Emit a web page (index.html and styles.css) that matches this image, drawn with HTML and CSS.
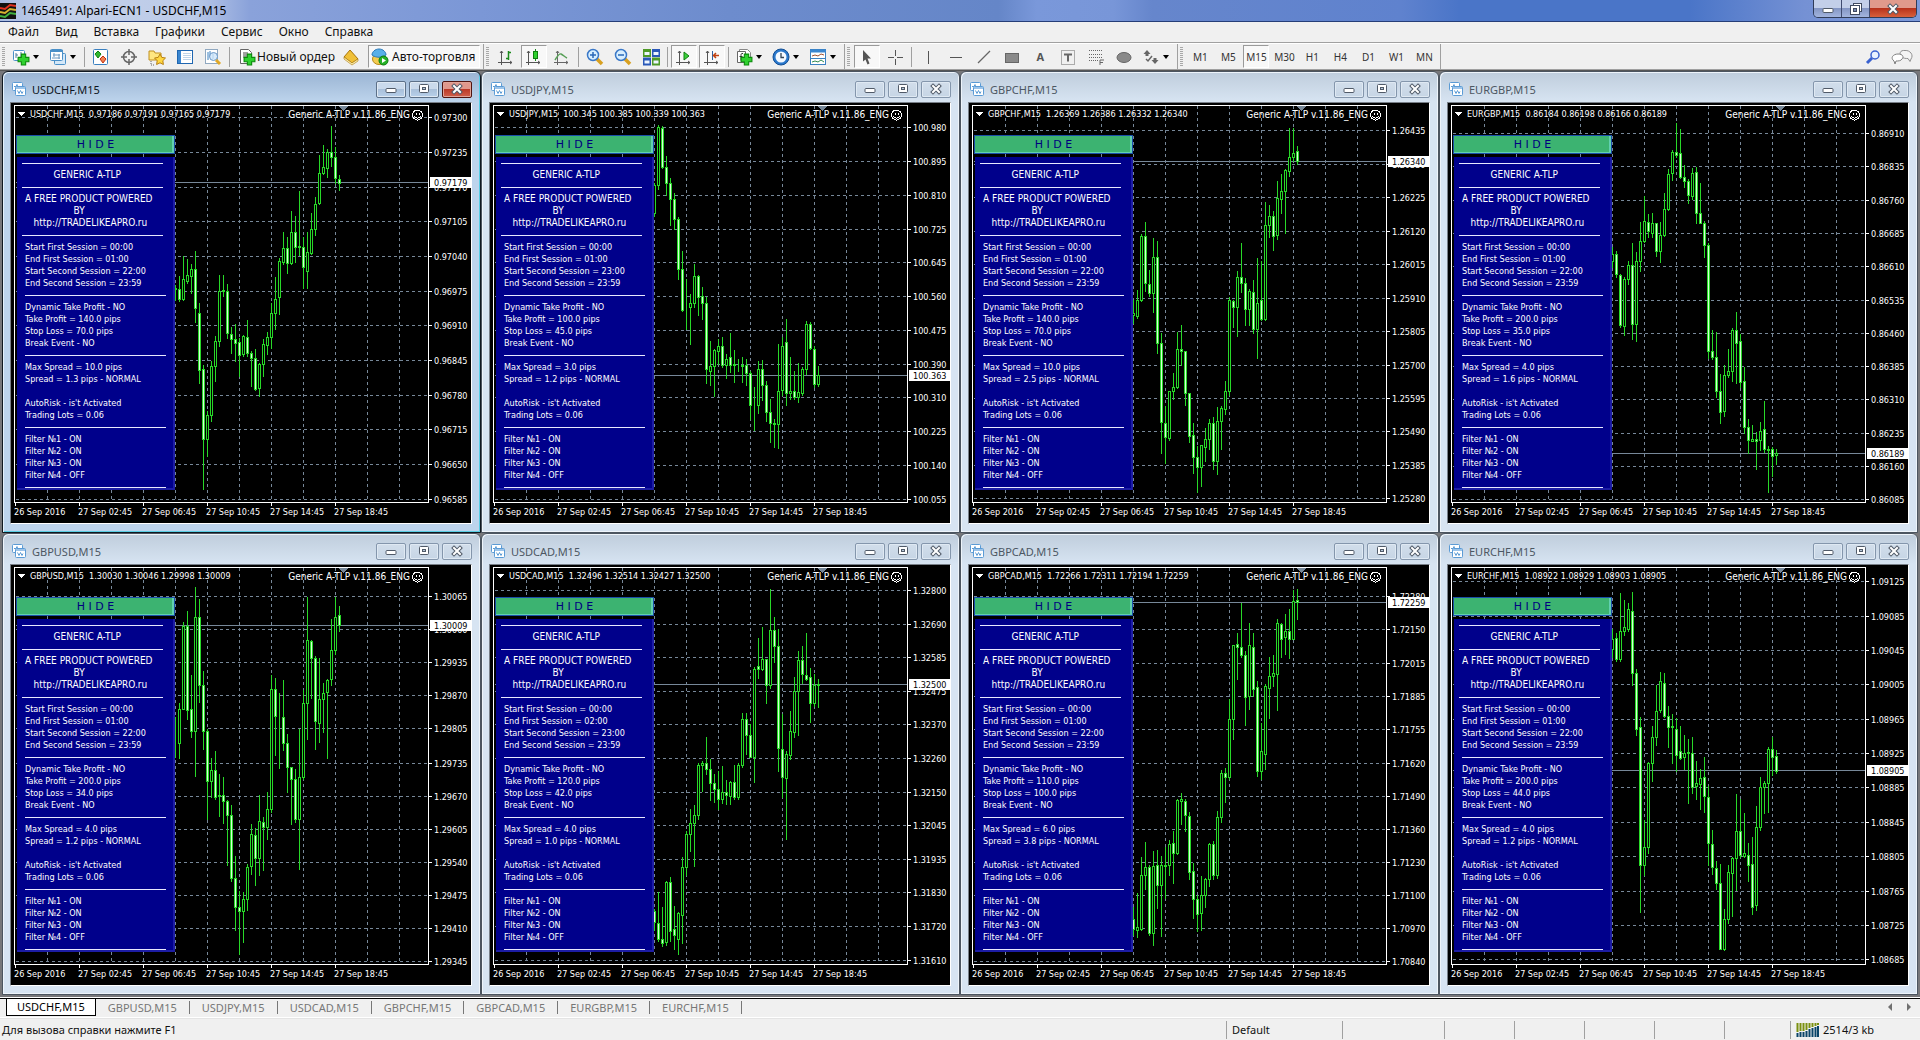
FILE: index.html
```
<!DOCTYPE html>
<html lang="ru">
<head>
<meta charset="utf-8">
<title>1465491: Alpari-ECN1 - USDCHF,M15</title>
<link rel="stylesheet" href="styles.css">
</head>
<body>
<svg class="defs" aria-hidden="true">
  <defs>
    <symbol id="i-chartwin" viewBox="0 0 14 14"><rect x="0.5" y="0.5" width="10" height="8" rx="1" fill="#fff" stroke="#5b9bd5"/><path d="M2 4.5h2l1-2 1 3 1-1h2" fill="none" stroke="#5b9bd5"/><rect x="3.5" y="4.5" width="10" height="9" rx="1" fill="#fff" stroke="#5b9bd5"/><path d="M4 6h9" stroke="#9cc4ea" stroke-width="2"/><path d="M5.500 8.500l1.500 3 1.500-3 1.500 3 1-2" fill="none" stroke="#5b9bd5"/></symbol>
    <symbol id="i-min" viewBox="0 0 14 12"><rect x="2" y="5.500" width="10" height="4" rx="1" fill="#fff" stroke="#505a68"/></symbol>
    <symbol id="i-max" viewBox="0 0 14 12"><rect x="2.500" y="1.500" width="9" height="8" rx="1" fill="#fff" stroke="#505a68"/><rect x="5.500" y="4.500" width="3" height="2" fill="#b8c8da" stroke="#505a68"/></symbol>
    <symbol id="i-close" viewBox="0 0 14 12"><path d="M4 3l6 6M10 3l-6 6" stroke="#505a68" stroke-width="4" stroke-linecap="square"/><path d="M4 3l6 6M10 3l-6 6" stroke="#fff" stroke-width="2" stroke-linecap="square"/></symbol>
    <symbol id="i-plus" viewBox="0 0 12 12"><path d="M4 1h4v3h3v4h-3v3h-4v-3h-3v-4h3z" fill="#2fd12f" stroke="#0b8a0b"/></symbol>
  </defs>
</svg>

<header class="titlebar">
  <svg class="app-icon" viewBox="0 0 16 16"><rect width="16" height="16" fill="#111"/><path d="M0 5l5 1 5-4 6 1" fill="none" stroke="#e03020" stroke-width="2"/><path d="M0 9l5 1 5-4 6 1" fill="none" stroke="#d8b030" stroke-width="2"/><path d="M0 13l5 1 5-4 6 1" fill="none" stroke="#40b040" stroke-width="2"/></svg>
  <h1 class="app-title">1465491: Alpari-ECN1 - USDCHF,M15</h1>
  <div class="sys-buttons">
    <button class="sys" aria-label="Свернуть"><svg width="14" height="12"><use href="#i-min"/></svg></button>
    <button class="sys" aria-label="Свернуть в окно"><svg width="14" height="12" viewBox="0 0 14 12"><rect x="4.500" y="0.500" width="8" height="8" fill="#fff" stroke="#404a60"/><rect x="1.500" y="2.500" width="9" height="9" fill="#fff" stroke="#404a60"/><rect x="4.500" y="5.500" width="3" height="3" fill="#7888b0" stroke="#404a60"/></svg></button>
    <button class="sys sys-close" aria-label="Закрыть"><svg width="14" height="12"><use href="#i-close"/></svg></button>
  </div>
</header>

<nav class="menu">
  <button>Файл</button><button>Вид</button><button>Вставка</button><button>Графики</button><button>Сервис</button><button>Окно</button><button>Справка</button>
</nav>

<div class="toolbars">
  <div class="toolbar">
    <span class="grip"></span>
    <button class="tool drop" aria-label="Новый график"><svg width="18" height="18" viewBox="0 0 18 18"><rect x="1.500" y="2.500" width="11" height="10" rx="1" fill="#fff" stroke="#4a90c8"/><path d="M4 5v5M4 7h2M9 4v5" stroke="#4a7a98"/><use href="#i-plus" x="5" y="5" width="13" height="13"/></svg></button>
    <button class="tool drop" aria-label="Профили"><svg width="18" height="18" viewBox="0 0 18 18"><rect x="5.500" y="5.500" width="11" height="11" rx="1" fill="#d5e8f8" stroke="#4a90c8"/><rect x="1.500" y="1.500" width="12" height="11" rx="1" fill="#fff" stroke="#4a90c8"/><path d="M1 3h13" stroke="#4a90c8" stroke-width="2"/><path d="M4 7h7M5 5v4M10 6v5M3 10h8" stroke="#6a98c0"/></svg></button>
    <span class="sep"></span>
    <button class="tool" aria-label="Обзор рынка"><svg width="18" height="18" viewBox="0 0 18 18"><rect x="1.500" y="1.500" width="14" height="15" rx="1" fill="#fff" stroke="#3a80c0"/><path d="M6 3l3 3-3 4-3-4z" fill="#30b830" stroke="#108010"/><path d="M11 8l3 3-3 4-3-4z" fill="#f08050" stroke="#c03010"/></svg></button>
    <button class="tool" aria-label="Окно данных"><svg width="18" height="18" viewBox="0 0 18 18"><circle cx="9" cy="9" r="5.500" fill="none" stroke="#666" stroke-width="1.500"/><path d="M9 1v6M9 11v6M1 9h6M11 9h6" stroke="#666" stroke-width="1.500"/></svg></button>
    <button class="tool" aria-label="Навигатор"><svg width="18" height="18" viewBox="0 0 18 18"><path d="M1 3h5l1 2h6v7H1z" fill="#ffe680" stroke="#c09020"/><path d="M3 13v4h4" fill="none" stroke="#666" stroke-dasharray="1 1"/><path d="M12 6l1.800 3.400 3.700.6-2.700 2.700.6 3.800-3.400-1.700-3.400 1.700.6-3.800L6.500 10l3.700-.6z" fill="#ffd740" stroke="#b88010"/></svg></button>
    <button class="tool" aria-label="Терминал"><svg width="18" height="18" viewBox="0 0 18 18"><rect x="1.500" y="2.500" width="15" height="13" fill="#fff" stroke="#1f66b0"/><rect x="2" y="3" width="3" height="12" fill="#3a86d0"/><path d="M7 5.500h8M7 7.500h8M7 9.500h8M7 11.500h8" stroke="#c0d4e8"/></svg></button>
    <button class="tool" aria-label="Тестер стратегий"><svg width="18" height="18" viewBox="0 0 18 18"><rect x="1.500" y="1.500" width="12" height="14" fill="#fff" stroke="#90a8c0"/><path d="M4 4v8M6 3v6M9 5v6" stroke="#3a80c0"/><circle cx="9.500" cy="8.500" r="4" fill="#cfe6fa" fill-opacity=".8" stroke="#6a98c8"/><path d="M12 12l4 4" stroke="#e0a828" stroke-width="3"/></svg></button>
    <span class="sep"></span>
    <button class="tool order"><svg width="18" height="18" viewBox="0 0 18 18"><path d="M2.500 1.500h8l3 3v11h-11z" fill="#fff" stroke="#666"/><path d="M5 5h5M5 7h6M5 9h6" stroke="#444"/><use href="#i-plus" x="5" y="5" width="13" height="13"/></svg>Новый ордер</button>
    <button class="tool" aria-label="MetaEditor"><svg width="18" height="18" viewBox="0 0 18 18"><path d="M8 2l8 9-6 4-8-6z" fill="#f0c038" stroke="#a87408"/><path d="M2 9l8 6 6-4v2l-6 4-8-6z" fill="#fff2b0" stroke="#a87408" stroke-width=".6"/></svg></button>
    <button class="tool auto pressed"><svg width="18" height="18" viewBox="0 0 18 18"><ellipse cx="8" cy="11" rx="6.500" ry="5.500" fill="#f3cc50" stroke="#b88818"/><path d="M1 7c0-3 3-6 7-6s7 3 7 6c-4 3-10 3-14 0z" fill="#58b0e8" stroke="#2a78b8"/><circle cx="12.500" cy="12.500" r="4.500" fill="#26b226" stroke="#0b7a0b"/><path d="M11 10l4 2.500-4 2.500z" fill="#fff"/></svg>Авто-торговля</button>
  </div>
  <div class="toolbar">
    <span class="grip"></span>
    <button class="tool" aria-label="Бары"><svg width="18" height="18" viewBox="0 0 18 18"><path d="M4.500 3v14M1 14.500h14M3 5l1.500-2 1.500 2M13 13l2 1.500-2 1.500" fill="none" stroke="#555"/><path d="M11.500 3v9M9 10.500h2M12 4.500h2" stroke="#1c8a1c" stroke-width="1.500"/></svg></button>
    <button class="tool pressed" aria-label="Свечи"><svg width="18" height="18" viewBox="0 0 18 18"><path d="M3.500 3v14M1 14.500h14M2 5l1.500-2 1.500 2M13 13l2 1.500-2 1.500" fill="none" stroke="#555"/><path d="M10.500 1v12" stroke="#1c8a1c"/><rect x="8.500" y="3.500" width="4" height="7" fill="#2fd12f" stroke="#108010"/></svg></button>
    <button class="tool" aria-label="Линия"><svg width="18" height="18" viewBox="0 0 18 18"><path d="M4.500 3v14M1 14.500h14M3 5l1.500-2 1.500 2M13 13l2 1.500-2 1.500" fill="none" stroke="#666"/><path d="M2 12c2-3 4-7 6-6s4 3 6 4" fill="none" stroke="#58a058" stroke-width="1.500"/></svg></button>
    <span class="sep"></span>
    <button class="tool" aria-label="Увеличить"><svg width="18" height="18" viewBox="0 0 18 18"><path d="M10 10l6 6" stroke="#d8a020" stroke-width="3.500"/><circle cx="7" cy="7" r="5.500" fill="#d8efff" stroke="#3a78c8" stroke-width="1.500"/><path d="M7 4v6M4 7h6" stroke="#2a68b8" stroke-width="1.500"/></svg></button>
    <button class="tool" aria-label="Уменьшить"><svg width="18" height="18" viewBox="0 0 18 18"><path d="M10 10l6 6" stroke="#d8a020" stroke-width="3.500"/><circle cx="7" cy="7" r="5.500" fill="#d8efff" stroke="#3a78c8" stroke-width="1.500"/><path d="M4 7h6" stroke="#2a68b8" stroke-width="1.500"/></svg></button>
    <button class="tool" aria-label="Окна мозаикой"><svg width="18" height="18" viewBox="0 0 18 18"><path d="M1 1h8v8H1zM10 9.500h8v8h-8z" fill="#4f9a28"/><path d="M10 1h8v8h-8zM1 9.500h8v8H1z" fill="#2a58b8"/><path d="M2.500 4h5v3h-5zM11.500 4h5v3h-5zM2.500 12.500h5v3h-5zM11.500 12.500h5v3h-5z" fill="#eef6ff"/></svg></button>
    <span class="sep"></span>
    <button class="tool pressed" aria-label="Автопрокрутка"><svg width="18" height="18" viewBox="0 0 18 18"><path d="M4.500 3v14M1 14.500h14M3 5l1.500-2 1.500 2M13 13l2 1.500-2 1.500" fill="none" stroke="#555"/><path d="M9 4l5 4-5 4z" fill="#3ad03a" stroke="#108010"/></svg></button>
    <button class="tool pressed" aria-label="Сдвиг графика"><svg width="18" height="18" viewBox="0 0 18 18"><path d="M4.500 3v14M1 14.500h14M3 5l1.500-2 1.500 2M13 13l2 1.500-2 1.500" fill="none" stroke="#555"/><path d="M9.500 3v9" stroke="#3060a0"/><path d="M10 7.500h6M13 5l-2.500 2.500L13 10" fill="none" stroke="#c04010" stroke-width="1.500"/></svg></button>
    <span class="sep"></span>
    <button class="tool drop" aria-label="Индикаторы"><svg width="18" height="18" viewBox="0 0 18 18"><path d="M4.500 4.500v-3h8l3 3v9h-3" fill="#fff" stroke="#888"/><path d="M2.500 3.500h8v11h-8z" fill="#fff" stroke="#666"/><path d="M8 5.500c-2-.5-2 1-2 2v5M4.500 8.500h3" fill="none" stroke="#333"/><use href="#i-plus" x="5" y="5" width="13" height="13"/></svg></button>
    <button class="tool drop" aria-label="Периодичность"><svg width="18" height="18" viewBox="0 0 18 18"><circle cx="9" cy="9" r="8" fill="#2a78cc" stroke="#124e94"/><circle cx="9" cy="9" r="5.500" fill="#f4f9ff"/><path d="M9 5v4.500h3" fill="none" stroke="#345" stroke-width="1.300"/></svg></button>
    <button class="tool drop" aria-label="Шаблоны"><svg width="18" height="18" viewBox="0 0 18 18"><rect x="1.500" y="1.500" width="15" height="15" fill="#fff" stroke="#3a80c0"/><path d="M1 3h16" stroke="#3a86d0" stroke-width="3"/><path d="M2 10.500h14" stroke="#3a80c0"/><path d="M3 8l3-1 3 1 3-2 3 1" fill="none" stroke="#a05030"/><path d="M3 14l3-1 3 1 3-2 3 2" fill="none" stroke="#308a50"/></svg></button>
  </div>
  <div class="toolbar">
    <span class="grip"></span>
    <button class="tool pressed" aria-label="Курсор"><svg width="18" height="18" viewBox="0 0 18 18"><path d="M5 2l8 8.500H9.500l2 5-2 1-2-5L5 13.500z" fill="#555"/></svg></button>
    <button class="tool" aria-label="Перекрестие"><svg width="18" height="18" viewBox="0 0 18 18"><path d="M9.500 2v6M9.500 11v6M2 9.500h6M11 9.500h6" stroke="#555"/></svg></button>
    <span class="sep"></span>
    <button class="tool" aria-label="Вертикальная линия"><svg width="18" height="18" viewBox="0 0 18 18"><path d="M9.500 3v13" stroke="#555"/></svg></button>
    <button class="tool" aria-label="Горизонтальная линия"><svg width="18" height="18" viewBox="0 0 18 18"><path d="M3 9.500h12" stroke="#555"/></svg></button>
    <button class="tool" aria-label="Трендовая линия"><svg width="18" height="18" viewBox="0 0 18 18"><path d="M3 15L15 3" stroke="#666" stroke-width="1.300"/></svg></button>
    <button class="tool" aria-label="Прямоугольник"><svg width="18" height="18" viewBox="0 0 18 18"><rect x="2.500" y="5.500" width="13" height="9" fill="#8a8a8a" stroke="#666"/></svg></button>
    <button class="tool letter">A</button>
    <button class="tool" aria-label="Метка"><svg width="18" height="18" viewBox="0 0 18 18"><rect x="2.500" y="2.500" width="13" height="14" fill="none" stroke="#666" stroke-dasharray="1 1"/><path d="M5 6.500h8M9 6.500v7" stroke="#666" stroke-width="2"/></svg></button>
    <button class="tool" aria-label="Фибоначчи"><svg width="18" height="18" viewBox="0 0 18 18"><path d="M2 2.500h14M2 6.500h14M2 9.500h14M2 12.500h9" stroke="#666" stroke-dasharray="1 1"/><path d="M13 17v-5h4M13 14.500h3" fill="none" stroke="#666"/></svg></button>
    <button class="tool" aria-label="Эллипс"><svg width="18" height="18" viewBox="0 0 18 18"><ellipse cx="9" cy="9.500" rx="7" ry="5" fill="#8a8a8a" stroke="#666"/></svg></button>
    <button class="tool drop" aria-label="Стрелки"><svg width="18" height="18" viewBox="0 0 18 18"><path d="M5 2l3.500 4H6.500v2h-3V6H1.500zM13 16l3.500-4h-2v-2h-3v2h-2z" fill="#666"/><path d="M4 11l2 2 4-5" fill="none" stroke="#666" stroke-width="1.500"/></svg></button>
  </div>
  <div class="toolbar periods">
    <span class="grip"></span>
    <button class="tool">M1</button><button class="tool">M5</button><button class="tool pressed">M15</button><button class="tool">M30</button><button class="tool">H1</button><button class="tool">H4</button><button class="tool">D1</button><button class="tool">W1</button><button class="tool">MN</button>
  </div>
  <div class="toolbar tail">
    <button class="tool" aria-label="Поиск"><svg width="16" height="16" viewBox="0 0 16 16"><path d="M7 9l-5 5" stroke="#3a62d0" stroke-width="3"/><circle cx="10" cy="6" r="4" fill="#e8f2ff" stroke="#3a62d0" stroke-width="1.500"/></svg></button>
    <button class="tool" aria-label="Сообщения"><svg width="22" height="16" viewBox="0 0 22 16"><path d="M20 10c3-4-1-9-6-8.500-5-.5-6 3-4 6 2 2 5 2 7 2l2 3z" fill="#f4f4f4" stroke="#909090"/><path d="M3 12c-4-3-1-7 4-7s6 3 4 5c-1 2-4 2-6 2l-1 3z" fill="#fff" stroke="#808080"/></svg></button>
  </div>
</div>

<main class="mdi" id="mdi"></main>

<nav class="tabs">
  <button class="tab active">USDCHF,M15</button><button class="tab">GBPUSD,M15</button><button class="tab">USDJPY,M15</button><button class="tab">USDCAD,M15</button><button class="tab">GBPCHF,M15</button><button class="tab">GBPCAD,M15</button><button class="tab">EURGBP,M15</button><button class="tab">EURCHF,M15</button>
  <span class="tab-scroll"><button aria-label="Назад"><svg width="6" height="8" viewBox="0 0 6 8"><path d="M5 0v8L1 4z" fill="#707070"/></svg></button><button aria-label="Вперед"><svg width="6" height="8" viewBox="0 0 6 8"><path d="M1 0v8l4-4z" fill="#707070"/></svg></button></span>
</nav>

<footer class="status">
  <span class="help">Для вызова справки нажмите F1</span>
  <span class="cell w116">Default</span>
  <span class="cell w102"></span>
  <span class="cell w70"></span>
  <span class="cell w70"></span>
  <span class="cell w70"></span>
  <span class="cell w70"></span>
  <span class="cell w66"></span>
  <span class="cell net"><svg width="23" height="14" viewBox="0 0 23 14"><path d="M1.500 0v9M4.500 0v8M7.500 0v8M10.500 0v7M13.500 0v5M16.500 0v4M19.500 0v3M22 0v2" stroke="#7a9010" stroke-width="2"/><path d="M1.500 10v4M4.500 9v5M7.500 9v5M10.500 8v6M13.500 6v8M16.500 5v9M19.500 4v10M22 3v11" stroke="#0a4468" stroke-width="2"/></svg>2514/3 kb</span>
</footer>
<script src="charts.js"></script>
</body>
</html>
```

FILE: styles.css
```
* { box-sizing: border-box; }
body {
  margin: 0;
  min-height: 100vh;
  display: flex;
  flex-direction: column;
  background: #f0f0f0;
  color: #111;
  font-family: "Noto Sans", "Open Sans", sans-serif;
  font-size: 11px;
}
button { font: inherit; color: inherit; border: 0; background: none; padding: 0; margin: 0; }
svg { display: block; flex: none; }
.defs { width: 0; height: 0; position: absolute; }

.titlebar {
  height: 22px;
  display: flex;
  align-items: center;
  gap: 5px;
  border-bottom: 1px solid #263e78;
  background: linear-gradient(90deg, #a9bce2 0, #c4d1ea 3%, #bccbe8 10%, #8aa2da 13%, #7b97d6 25%, #6d8ccd 38%, #6586c8 52%, #7a98da 54%, #7896d8 58%, #6686cc 60%, #5f82ce 73%, #4a75c8 76%, #4a75c8 88%, #7591d4 94%, #7c9ada 100%);
}
.app-icon { width: 16px; height: 16px; }
.app-title { flex: 1; margin: 0; font-size: 12px; line-height: 20px; font-weight: 400; color: #000; }
.sys-buttons { align-self: flex-start; display: flex; margin-right: 3px; border: 1px solid #303c58; border-top: 0; border-radius: 0 0 5px 5px; overflow: hidden; }
.sys { width: 28px; height: 17px; display: flex; justify-content: center; align-items: center; background: linear-gradient(#c3cfe9 45%, #8496c4 50%, #a3b5de); border-right: 1px solid #404c70; }
.sys-close { width: 46px; border-right: 0; background: linear-gradient(#e09a8c 45%, #b8331c 50%, #d8603c); }

.menu { height: 21px; display: flex; align-items: center; border-bottom: 1px solid #a0a0a0; font-size: 12px; }
.menu button { padding: 0 8px; line-height: 20px; }

.toolbars { height: 27px; display: flex; border-top: 1px solid #fff; border-bottom: 1px solid #a0a0a0; }
.toolbar { display: flex; align-items: center; border-right: 1px solid #a0a0a0; padding-right: 2px; }
.grip { width: 3px; height: 20px; margin: 0 3px 0 2px; background: repeating-linear-gradient(#a8a8a8 0 1px, #f0f0f0 1px 2px); }
.sep { width: 1px; height: 20px; margin: 0 2px; background: #a0a0a0; }
.tool { min-width: 28px; height: 23px; display: flex; align-items: center; justify-content: center; }
.drop { gap: 3px; width: 37px; justify-content: flex-start; padding-left: 4px; }
.drop::after { content: ""; border: 3px solid transparent; border-top: 4px solid #000; border-bottom: 0; }
.pressed { min-width: 26px; margin: 0 1px; border: 1px solid #fff; border-top-color: #9a9a9a; border-left-color: #9a9a9a; background: #f8f8f8; }
.order, .auto { font-size: 12px; white-space: nowrap; }
.order { gap: 1px; padding: 0 2px 0 6px; }
.auto { gap: 3px; padding: 0 4px 0 2px; margin-left: 3px; }
.letter { color: #555; font-weight: 700; }
.periods { font-size: 10px; color: #333; }
.tail { margin-left: auto; border: 0; padding-right: 4px; gap: 1px; }

.mdi {
  flex: 1;
  display: grid;
  grid-template-columns: repeat(4, 1fr);
  grid-auto-rows: 1fr;
  padding: 0 2px 2px;
  background: #77777a;
  border-top: 1px solid #555;
  border-bottom: 1px solid #fff;
}
.window {
  display: flex;
  flex-direction: column;
  padding: 0 8px 8px 7px;
  border: 1px solid #4c5560;
  border-radius: 6px 6px 0 0;
  box-shadow: inset 1px 1px 0 #eef4fa, inset -1px -1px 0 #eef4fa;
  background: linear-gradient(#bfcddc, #d7e4f2 30px);
}
.window.current {
  border-color: #101820;
  box-shadow: inset 1px 1px 0 #e4f0fa, inset -1px -1px 0 #58cde4;
  background: linear-gradient(#9ab4d3, #bdd4ec 30px);
}
.window-head { height: 30px; display: flex; align-items: center; gap: 3px; padding: 4px 0 0 2px; }
.window-title { flex: 1; margin: 0 0 0 3px; font-size: 11px; font-weight: 400; color: #4c5763; }
.current .window-title { color: #0c1420; }
.cap { width: 30px; height: 17px; display: flex; align-items: center; justify-content: center; border: 1px solid #8496ac; border-radius: 2px; background: linear-gradient(#d2deeb, #c6d5e5); box-shadow: inset 0 0 0 1px #dfe9f3; }
.current .cap { border-color: #5c7088; background: linear-gradient(#cadaec 45%, #a9c0da 50%, #b8d0ea); }
.current .cap-close { border-color: #501410; background: linear-gradient(#e0988c 45%, #bc3a28 50%, #d0604c); box-shadow: inset 0 0 0 1px #e0a498; }
.chart { position: relative; flex: 1; background: #000; border: 1px solid #fff; border-top-color: #787f88; border-left-color: #787f88; }
.plot { font-family: "DejaVu Sans Condensed", "DejaVu Sans", sans-serif; font-size: 9px; fill: #fff; }
.plot .advisor { font-size: 10px; }
.grid-line { stroke: #778899; stroke-dasharray: 3 3; fill: none; }
.frame { stroke: #fff; fill: none; }
.price-line { stroke: #778899; }
.bar { stroke: #28d828; fill: #000; }
.bar.down { fill: #d8ffd8; }
.tag { fill: #fff; }
.tag-text { fill: #000; }
.shift { fill: #778899; }

/* Expert panel laid over the price chart */
.expert { position: absolute; left: 5px; top: 32px; width: 159px; font-family: "DejaVu Sans Condensed", "DejaVu Sans", sans-serif; font-size: 9px; color: #fff; }
.hide { display: block; width: 100%; height: 19px; color: #000080; background: #3cb371; border: 1px solid #1a4fa8; box-shadow: inset -2px -1px 0 #62cfb0; font-family: "DejaVu Sans", sans-serif; font-size: 11px; white-space: pre; }
.info { display: flow-root; height: 333px; margin: 3px 0 0 1px; background: #00008b; border-right: 2px solid #1c1ca4; border-bottom: 2px solid #1c1ca4; }
.info p { height: 12px; line-height: 12px; margin: 0; padding-left: 8px; white-space: pre; }
.info .lead + p, .info .brand { font-size: 10px; }
.info p.row { font-size: 9px; }
.info hr { height: 1px; width: 141px; margin: 0 0 5px 8px; border: 0; background: #e8e8ff; }
.info p + hr, .info hr:first-child { margin-top: 6px; }
.info hr.lead { margin-left: 5px; }
.info hr:last-child { margin-bottom: 0; }

.tabs { height: 20px; display: flex; border-top: 1px solid #000; padding: 0 6px 2px 6px; color: #777; border-bottom: 1px solid #fff; }
.tab { padding: 0 12px; line-height: 13px; border-right: 1px solid #777; height: 13px; margin-top: 2px; }
.tab.active { height: 17px; margin-top: 0; padding: 0 10px; line-height: 16px; color: #000; background: #fff; border: 1px solid #000; border-top: 0; }
.tab-scroll { margin-left: auto; display: flex; align-items: center; gap: 13px; padding-right: 2px; }

.status { height: 22px; display: flex; align-items: center; border-top: 1px solid #e4e4e4; }
.help { flex: 1; padding-left: 2px; }
.cell { height: 18px; display: flex; align-items: center; gap: 4px; padding-left: 5px; border-left: 1px solid #a0a0a0; }
.w116 { width: 116px; }
.w102 { width: 102px; }
.w70 { width: 70px; }
.w66 { width: 66px; }
.net { width: 130px; }
```

FILE: charts.js
```
// Each series lists 42 bars as "high bodyTop bodyBottom low direction",
// in thirds of a pixel measured from `top`.
const charts = [
  { name: 'USDCHF', quote: '0.97186 0.97191 0.97165 0.97179', top: 99, now: 337, price: '0.97179',
    ss: '22:00', es: '01:00', tp: '140.0', sl: '70.0', max: '10.0', spread: '1.3', current: true,
    axis: '0.97300 142,0.97235 247,0.97170 352,0.97105 454,0.97040 559,0.96975 664,0.96910 766,0.96845 871,0.96780 976,0.96715 1078,0.96650 1183,0.96585 1288',
    bars: '645 655 657 690 u,618 658 686 692 d,558 628 686 690 u,568 614 632 640 u,582 596 618 670 u,542 598 715 755 d,698 728 900 938 d,885 898 1108 1256 d,1022 1036 1108 1158 u,873 888 1036 1053 u,798 812 888 932 u,615 662 812 828 u,615 660 662 678 u,643 662 788 803 d,772 793 808 850 d,762 808 820 872 d,805 817 856 918 d,795 797 852 857 u,750 800 848 857 d,842 850 864 947 d,838 864 956 960 d,880 883 955 977 u,806 823 882 918 u,785 800 824 852 u,698 730 800 834 u,622 686 730 777 u,565 574 682 732 u,487 535 577 582 u,500 535 580 610 d,423 485 578 582 u,437 485 530 575 d,362 528 530 555 d,502 530 592 653 d,487 547 602 655 u,430 478 550 552 u,382 403 478 494 u,256 308 400 402 u,226 292 310 312 u,236 247 294 322 u,168 247 262 287 d,232 262 324 340 d,316 326 338 360 d' },
  { name: 'USDJPY', quote: '100.345 100.385 100.339 100.363', top: 99, now: 916, price: '100.363',
    ss: '23:00', es: '01:00', tp: '100.0', sl: '45.0', max: '3.0', spread: '1.2',
    axis: '100.980 172,100.895 274,100.810 376,100.725 478,100.645 577,100.560 679,100.475 781,100.390 883,100.310 982,100.225 1084,100.140 1186,100.055 1288',
    bars: '338 346 428 438 u,165 172 346 356 u,168 174 292 295 d,258 292 338 376 d,324 338 386 466 d,368 386 448 478 d,442 448 598 626 d,542 598 720 722 d,627 716 718 778 u,672 700 712 822 u,582 618 700 712 u,615 618 680 734 d,650 678 698 746 d,682 698 898 938 d,812 888 902 944 u,838 840 888 978 u,808 828 842 882 u,800 828 886 890 d,853 866 886 924 u,788 862 884 906 d,840 883 885 936 d,868 884 886 902 d,860 884 887 936 d,866 884 910 946 d,902 910 1006 1046 d,950 1004 1006 1080 d,873 898 1006 1028 u,870 898 946 990 d,932 946 1026 1052 d,988 1026 1058 1116 d,1048 1060 1062 1130 d,822 962 1062 1134 u,800 828 960 974 u,746 816 968 1004 d,862 962 970 986 u,902 962 982 986 d,878 966 980 996 u,892 896 968 976 u,753 762 896 912 u,757 762 834 838 d,828 836 942 952 d,887 916 942 948 u' },
  { name: 'GBPCHF', quote: '1.26369 1.26386 1.26332 1.26340', top: 99, now: 274, price: '1.26340',
    ss: '22:00', es: '01:00', tp: '140.0', sl: '70.0', max: '10.0', spread: '2.5',
    axis: '1.26435 181,1.26330 283,1.26225 382,1.26120 484,1.26015 583,1.25910 685,1.25805 784,1.25700 886,1.25595 985,1.25490 1084,1.25385 1186,1.25280 1285',
    bars: '690 730 736 760 u,660 690 738 744 u,493 498 690 692 u,455 498 640 662 d,600 642 668 678 d,503 562 668 726 u,513 562 820 848 d,790 820 1056 1148 d,1008 1060 1102 1178 d,962 964 1104 1110 u,908 950 964 988 u,786 836 952 954 u,765 836 842 884 d,842 844 970 1004 d,968 970 1098 1116 d,1060 1096 1162 1208 d,1128 1162 1192 1266 d,1124 1126 1192 1248 u,1075 1106 1130 1172 u,1048 1060 1106 1138 u,1042 1060 1174 1196 d,1012 1054 1174 1212 u,1008 1014 1054 1138 u,934 964 1018 1032 u,682 690 964 974 u,690 692 710 772 d,603 620 710 798 u,519 620 640 665 d,625 640 716 764 d,657 664 716 766 u,630 666 776 788 d,563 700 776 864 u,573 690 748 750 d,395 466 748 750 u,404 438 464 500 u,424 438 498 540 d,332 384 496 508 u,312 364 386 428 u,297 300 362 490 u,175 260 302 318 u,175 250 260 272 u,228 244 274 282 d' },
  { name: 'EURGBP', quote: '0.86184 0.86198 0.86166 0.86189', top: 99, now: 1150, price: '0.86189',
    ss: '22:00', es: '01:00', tp: '200.0', sl: '35.0', max: '4.0', spread: '1.6',
    axis: '0.86910 190,0.86835 289,0.86760 391,0.86685 490,0.86610 589,0.86535 691,0.86460 790,0.86385 889,0.86310 988,0.86235 1090,0.86160 1189,0.86085 1288',
    bars: '532 552 572 590 u,543 552 612 622 d,612 614 766 770 d,620 626 768 796 u,574 584 628 642 u,518 584 762 806 d,547 574 762 812 u,457 514 574 604 u,378 454 512 516 u,432 456 482 502 d,430 460 488 500 u,458 460 542 558 d,455 496 544 576 u,370 418 496 498 u,297 312 418 420 u,240 247 310 330 u,160 247 254 262 d,176 250 322 324 d,286 322 334 350 d,326 334 376 400 d,294 308 378 386 u,290 306 430 458 d,340 428 458 460 d,452 458 524 562 d,518 526 844 864 d,780 844 860 868 d,786 860 962 980 d,912 962 1026 1058 d,886 914 1024 1038 u,838 904 916 920 u,774 780 904 932 u,726 780 820 938 d,792 814 936 952 d,892 934 1072 1090 d,1048 1072 1110 1150 d,1066 1106 1112 1114 u,1086 1106 1112 1198 d,1056 1084 1110 1140 u,993 1078 1138 1146 d,1128 1138 1140 1266 d,1132 1138 1158 1218 d,1136 1150 1156 1182 u' },
  { name: 'GBPUSD', quote: '1.30030 1.30046 1.29998 1.30009', top: 105, now: 286, price: '1.30009',
    ss: '22:00', es: '01:00', tp: '200.0', sl: '34.0', max: '4.0', spread: '1.2',
    axis: '1.30065 199,1.30000 298,1.29935 397,1.29870 496,1.29805 595,1.29735 700,1.29670 799,1.29605 898,1.29540 997,1.29475 1096,1.29410 1195,1.29345 1294',
    bars: '560 632 634 680 u,518 536 638 684 u,276 288 536 538 u,244 288 540 566 d,434 538 604 622 d,170 262 604 738 u,206 262 466 516 d,424 466 604 656 d,598 604 754 866 d,684 720 754 800 u,662 720 800 806 d,732 796 798 858 d,740 796 814 878 d,810 812 856 1004 d,826 856 1044 1052 d,978 1044 1132 1200 d,1084 1130 1144 1272 d,1086 1106 1142 1236 u,1002 1012 1106 1140 u,882 912 1008 1032 u,894 914 984 1066 d,796 874 984 1034 u,862 876 892 1020 d,785 836 892 928 u,436 476 838 846 u,444 476 558 676 d,488 560 562 714 d,450 562 640 660 d,612 640 712 786 d,710 712 746 882 d,718 746 866 876 d,596 742 866 1018 u,480 518 740 748 u,200 330 518 626 u,330 332 384 504 d,378 384 574 656 d,384 506 578 636 u,458 488 508 606 u,446 450 486 684 u,268 360 448 464 u,200 262 360 372 u,228 254 286 302 d' },
  { name: 'USDCAD', quote: '1.32496 1.32514 1.32427 1.32500', top: 105, now: 463, price: '1.32500',
    ss: '23:00', es: '02:00', tp: '120.0', sl: '42.0', max: '4.0', spread: '1.0',
    axis: '1.32800 181,1.32690 283,1.32585 382,1.32475 484,1.32370 583,1.32260 685,1.32150 787,1.32045 886,1.31935 988,1.31830 1087,1.31720 1189,1.31610 1291',
    bars: '1136 1142 1176 1200 d,1086 1178 1228 1232 d,1132 1228 1240 1248 d,1052 1056 1236 1244 u,1040 1056 1202 1234 d,1128 1198 1216 1256 d,1146 1150 1226 1272 u,982 1010 1156 1240 u,904 912 1010 1036 u,836 880 912 964 u,824 856 880 1008 u,700 706 854 866 u,694 698 706 782 u,620 698 716 732 d,686 716 758 810 d,732 758 776 816 d,722 776 808 838 d,708 786 808 820 u,750 786 794 822 d,752 756 798 822 u,704 756 800 806 d,700 704 802 806 u,548 568 704 710 u,548 568 616 672 d,582 614 680 682 d,412 418 680 756 u,324 408 416 444 d,290 388 418 420 u,386 388 464 518 d,176 300 466 474 u,260 300 348 396 d,298 348 654 722 d,552 656 742 802 d,662 672 744 926 u,542 604 674 686 u,440 482 606 620 u,362 390 482 614 u,348 390 432 460 d,310 436 446 450 d,414 442 520 576 d,432 464 520 528 u,446 462 464 530 u' },
  { name: 'GBPCAD', quote: '1.72266 1.72311 1.72194 1.72259', top: 105, now: 217, price: '1.72259',
    ss: '22:00', es: '01:00', tp: '110.0', sl: '100.0', max: '6.0', spread: '3.8',
    axis: '1.72280 199,1.72150 298,1.72015 400,1.71885 499,1.71755 598,1.71620 700,1.71490 799,1.71360 898,1.71230 997,1.71100 1096,1.70970 1195,1.70840 1294',
    bars: '1130 1168 1198 1216 d,1088 1192 1200 1220 u,980 1036 1196 1200 u,936 1012 1036 1078 u,1006 1012 1210 1216 d,962 1008 1210 1246 u,960 1006 1066 1134 d,978 1006 1066 1218 u,952 1004 1008 1104 d,930 942 1004 1036 u,904 940 970 1058 d,806 810 970 972 u,788 808 814 882 u,808 814 856 904 d,846 858 1026 1048 d,1000 1024 1108 1164 d,1096 1106 1152 1202 d,1038 1096 1148 1200 u,1044 1046 1096 1132 u,938 942 1046 1068 u,934 942 1036 1046 d,844 860 1034 1044 u,720 728 862 876 u,714 730 740 816 d,508 566 742 748 u,344 346 566 628 u,308 342 352 448 d,218 352 374 380 d,364 374 500 584 d,280 346 498 538 u,310 350 476 498 d,452 470 722 738 d,578 664 722 748 u,462 468 672 716 u,382 438 474 564 u,376 430 438 468 u,268 280 432 540 u,278 282 326 380 d,252 304 322 372 u,238 304 326 384 d,180 214 326 328 u,178 210 216 266 d' },
  { name: 'EURCHF', quote: '1.08922 1.08929 1.08903 1.08905', top: 105, now: 721, price: '1.08905',
    ss: '22:00', es: '01:00', tp: '200.0', sl: '44.0', max: '4.0', spread: '1.2',
    axis: '1.09125 154,1.09085 259,1.09045 361,1.09005 463,1.08965 568,1.08925 670,1.08885 772,1.08845 877,1.08805 979,1.08765 1084,1.08725 1186,1.08685 1288',
    bars: '296 326 358 380 u,310 324 388 392 d,188 302 386 392 u,210 292 302 314 u,220 236 296 302 u,186 244 430 466 d,416 430 596 614 d,562 592 1004 1146 d,870 952 1004 1036 u,696 700 950 970 u,588 620 700 752 u,464 544 622 646 u,426 454 540 546 u,430 460 558 562 d,528 558 590 652 d,552 588 592 700 d,564 596 676 722 d,588 664 684 686 d,616 670 682 716 u,626 666 670 818 u,622 668 770 788 d,694 760 768 808 u,718 744 762 836 u,682 742 798 846 d,768 800 940 1004 d,900 942 1010 1032 d,992 1014 1060 1078 d,1002 1060 1256 1258 d,1138 1168 1256 1260 u,1006 1026 1168 1180 u,980 984 1028 1158 u,792 902 984 1080 u,806 904 974 980 d,850 970 978 980 u,940 974 1006 1054 d,920 1002 1132 1152 d,828 892 1126 1140 u,742 772 890 900 u,754 758 772 850 u,652 656 758 846 u,622 656 680 736 d,660 678 722 728 d' }
];
const times = ['26 Sep 2016', '27 Sep 02:45', '27 Sep 06:45', '27 Sep 10:45', '27 Sep 14:45', '27 Sep 18:45'];

function plot(c) {
  const y = v => Math.round((v - c.top) / 3) + 0.5;
  let s = '';
  for (let i = 0; i < 12; i++) s += `<path class="grid-line" d="M${36.5 + 32 * i} 3V399"/>`;
  const axis = c.axis.split(',').map(a => a.split(' '));
  for (const [, v] of axis) s += `<path class="grid-line" d="M5 ${y(v)}H417"/>`;
  s += `<path class="price-line" d="M5 ${y(c.now)}H418"/>`;
  c.bars.split(',').forEach((b, i) => {
    const [hi, t, bt, lo, dir] = b.split(' ');
    const x = 164.5 + 4 * i;
    s += `<path class="bar" d="M${x} ${y(hi) - 0.5}V${y(lo) + 0.5}"/>`;
    s += `<rect class="bar ${dir === 'd' ? 'down' : ''}" x="${x - 1}" y="${y(t)}" width="2" height="${y(bt) - y(t)}"/>`;
  });
  s += '<rect class="frame" x="3.5" y="2.500" width="414" height="397"/>';
  s += '<path class="shift" d="M328 3h9l-4.500 5z"/>';
  for (const [p, v] of axis) s += `<path class="frame" d="M418 ${y(v)}h3"/><text x="423" y="${y(v) + 3.5}">${p}</text>`;
  s += `<rect class="tag" x="419" y="${y(c.now) - 5.5}" width="41" height="11"/><text class="tag-text" x="423" y="${y(c.now) + 3.5}">${c.price}</text>`;
  times.forEach((t, i) => { s += `<path class="frame" d="M${4.5 + 64 * i} 400v3"/><text x="${3 + 64 * i}" y="412">${t}</text>`; });
  s += `<path d="M7 9h7l-3.500 4z"/><text x="19" y="14">${c.name},M15&#160; ${c.quote}</text>`;
  s += '<text class="advisor" x="399" y="15" text-anchor="end">Generic A-TLP v.11.86_ENG</text>';
  s += '<circle class="frame" cx="406.500" cy="12" r="5"/><path class="frame" d="M403.500 13c1 3 5 3 6 0M405 9.500v2M408 9.500v2"/>';
  return `<svg class="plot" width="460" height="420" shape-rendering="crispEdges">${s}</svg>`;
}

function info(c) {
  const lead = '<hr class="lead">', rule = '<hr>';
  const brand = (...rows) => rows.map(r => `<p class="brand">${r}</p>`).join('');
  const p = (...rows) => rows.map(r => `<p class="row">${r}</p>`).join('');
  return lead + brand('          GENERIC A-TLP') + lead +
    brand('A FREE PRODUCT POWERED', '                 BY', '   http://TRADELIKEAPRO.ru') + lead +
    p('Start First Session = 00:00', `End First Session = ${c.es}`, `Start Second Session = ${c.ss}`, 'End Second Session = 23:59') + rule +
    p('Dynamic Take Profit - NO', `Take Profit = ${c.tp} pips`, `Stop Loss = ${c.sl} pips`, 'Break Event - NO') + rule +
    p(`Max Spread = ${c.max} pips`, `Spread = ${c.spread} pips - NORMAL`, '', "AutoRisk - is't Activated", 'Trading Lots = 0.06') + rule +
    p('Filter №1 - ON', 'Filter №2 - ON', 'Filter №3 - ON', 'Filter №4 - OFF') + rule;
}

document.getElementById('mdi').innerHTML = charts.map(c => `
  <section class="window ${c.current ? 'current' : ''}">
    <header class="window-head">
      <svg width="14" height="14"><use href="#i-chartwin"/></svg>
      <h2 class="window-title">${c.name},M15</h2>
      <button class="cap" aria-label="Свернуть"><svg width="14" height="12"><use href="#i-min"/></svg></button>
      <button class="cap" aria-label="Развернуть"><svg width="14" height="12"><use href="#i-max"/></svg></button>
      <button class="cap cap-close" aria-label="Закрыть"><svg width="14" height="12"><use href="#i-close"/></svg></button>
    </header>
    <div class="chart">${plot(c)}
      <div class="expert"><button class="hide">H I D E</button><div class="info">${info(c)}</div></div>
    </div>
  </section>`).join('');
```
